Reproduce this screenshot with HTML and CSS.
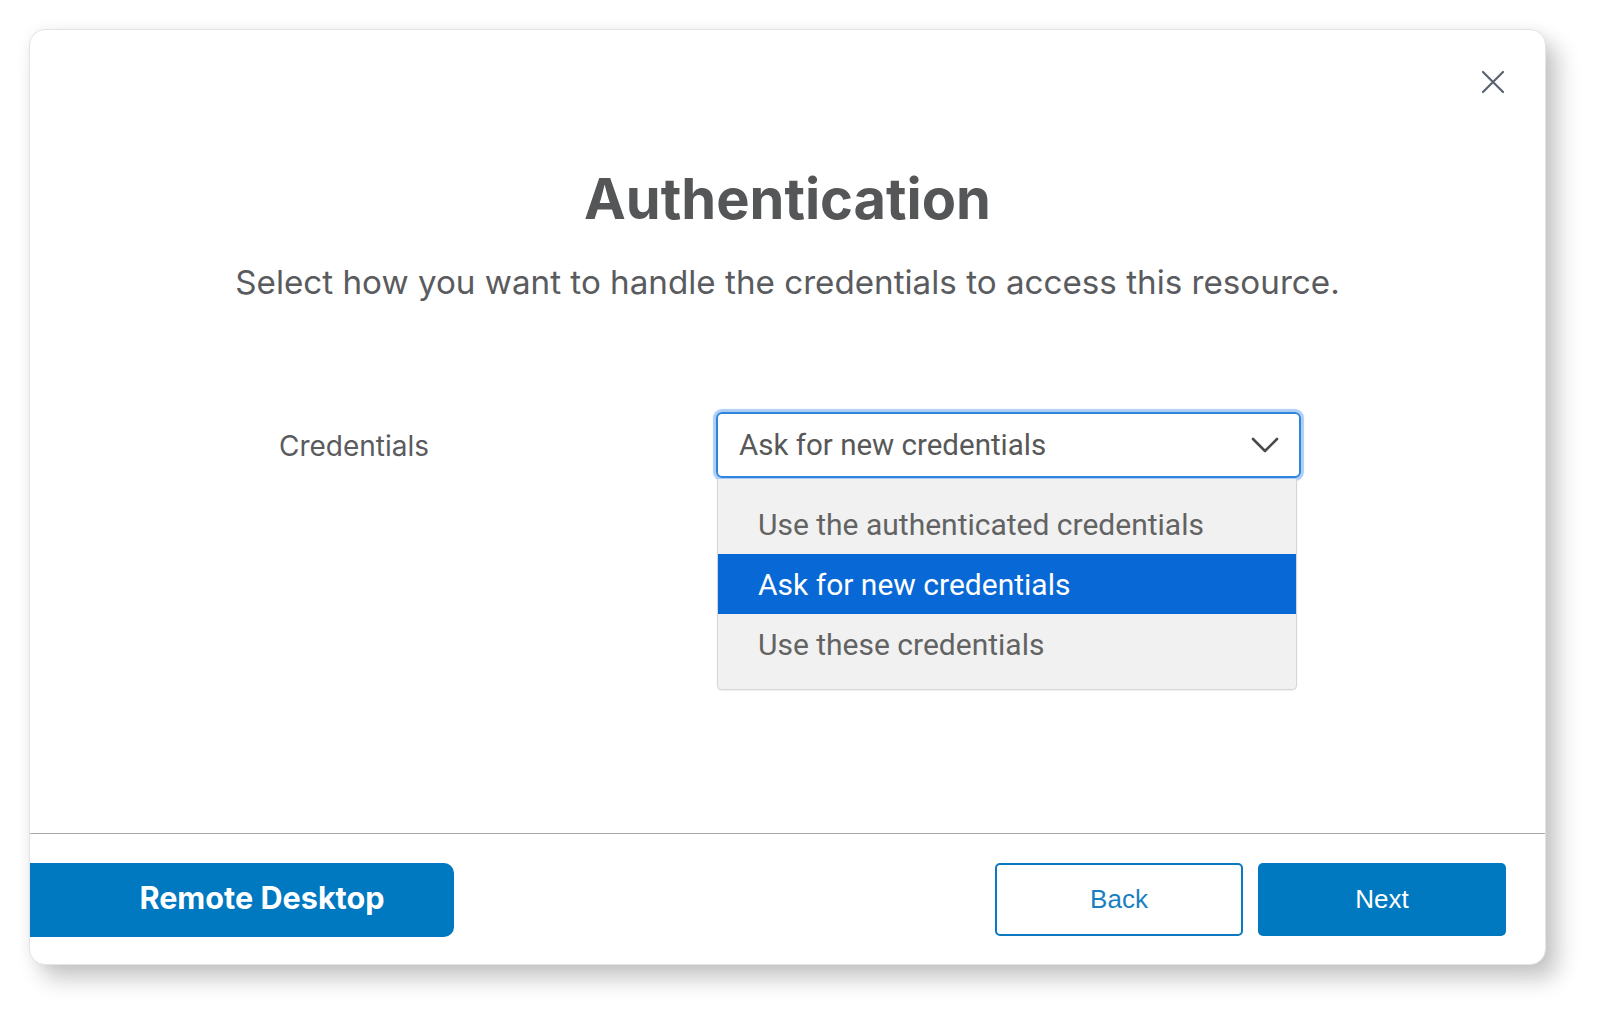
FILE: index.html
```html
<!DOCTYPE html>
<html lang="en">
<head>
  <meta charset="UTF-8" />
  <meta name="viewport" content="width=device-width, initial-scale=1.0"/>
  <title>Authentication</title>
  <link rel="stylesheet" href="styles.css">
</head>
<body>

  <div class="dialog">
    <button class="fechar" aria-label="Close">
      <svg width="24" height="24" viewBox="0 0 24 24">
        <path d="M2 2 L22 22 M22 2 L2 22" stroke="#5a6270" stroke-width="2.2" fill="none" stroke-linecap="round"/>
      </svg>
    </button>

    <main class="conteudo">
      <h1>Authentication</h1>
      <p class="subtitulo">Select how you want to handle the credentials to access this resource.</p>

      <div class="campo">
        <label class="rotulo">Credentials</label>
        <div class="seletor">
          <div class="select-box">
            <span>Ask for new credentials</span>
            <svg width="28" height="16" viewBox="0 0 28 16">
              <path d="M2 2 L14 14 L26 2" stroke="#4a4a4a" stroke-width="2.6" fill="none" stroke-linecap="round" stroke-linejoin="round"/>
            </svg>
          </div>
          <ul class="opcoes">
            <li>Use the authenticated credentials</li>
            <li class="ativo">Ask for new credentials</li>
            <li>Use these credentials</li>
          </ul>
        </div>
      </div>
    </main>

    <footer class="rodape">
      <button class="btn-remote">Remote Desktop</button>
      <div class="acoes">
        <button class="btn-voltar">Back</button>
        <button class="btn-proximo">Next</button>
      </div>
    </footer>
  </div>

</body>
</html>
```

FILE: styles.css
```css
body {
  font-family: 'Inter', 'Noto Sans', sans-serif;
  background-color: #fff;
  color: #58595b;
  margin: 0;
  padding: 29px 0 55px 29px;
}

.dialog {
  position: relative;
  box-sizing: border-box;
  width: 1517px;
  height: 936px;
  background-color: #fff;
  border: 1px solid #e4e4e4;
  border-radius: 16px;
  box-shadow: 12px 14px 22px rgba(0, 0, 0, 0.22), 0 0 14px rgba(0, 0, 0, 0.05);
  display: flex;
  flex-direction: column;
  overflow: hidden;
}

.fechar {
  position: absolute;
  top: 40px;
  right: 40px;
  background: none;
  border: none;
  padding: 0;
  cursor: pointer;
}

.conteudo {
  flex: 1;
  padding-top: 134px;
  text-align: center;
}

h1 {
  margin: 0;
  font-size: 56px;
  line-height: 70px;
  font-weight: 700;
  color: #555658;
}

.subtitulo {
  margin: 28px 0 0;
  font-size: 33.2px;
  line-height: 40px;
  color: #5a5b5e;
}

.campo {
  display: grid;
  grid-template-columns: 437px 585px;
  margin-top: 110px;
  padding-left: 249px;
  text-align: left;
}

.rotulo {
  height: 66px;
  display: flex;
  align-items: center;
  padding-top: 1px;
  font-size: 28px;
  color: #5a5b5e;
}

.select-box {
  box-sizing: border-box;
  height: 66px;
  display: flex;
  align-items: center;
  justify-content: space-between;
  padding: 0 20px 0 21px;
  border: 2px solid #2f84dc;
  border-radius: 6px;
  box-shadow: 0 0 1px 3px rgba(120, 172, 238, 0.6);
  font-family: 'Roboto', sans-serif;
  font-size: 29.5px;
  color: #585858;
}

.opcoes {
  list-style: none;
  margin: 1px 4px 0 1px;
  padding: 15px 0;
  background-color: #f1f1f1;
  border: 1px solid #d6d6d6;
  border-top: none;
  border-radius: 0 0 5px 5px;
  box-shadow: 0 1px 2px rgba(0, 0, 0, 0.08);
}

.opcoes li {
  height: 60px;
  line-height: 61px;
  padding-left: 40px;
  font-family: 'Roboto', sans-serif;
  font-size: 30px;
  color: #636363;
}

.opcoes li.ativo {
  background-color: #0868d6;
  color: #fff;
}

.rodape {
  box-sizing: border-box;
  height: 131px;
  border-top: 1px solid #a9a9a9;
  display: flex;
  justify-content: space-between;
  align-items: flex-start;
  padding: 29px 39px 0 0;
}

button {
  cursor: pointer;
}

.btn-remote {
  width: 424px;
  height: 74px;
  padding: 0 0 6px 40px;
  background-color: #0079c1;
  border: none;
  border-radius: 0 10px 10px 0;
  color: #fff;
  font-family: 'Inter', sans-serif;
  font-size: 30.6px;
  font-weight: 700;
}

.acoes {
  display: flex;
  gap: 15px;
}

.btn-voltar, .btn-proximo {
  width: 248px;
  height: 73px;
  border-radius: 5px;
  font-family: 'Liberation Sans', Arial, sans-serif;
  font-size: 26px;
}

.btn-voltar {
  background-color: #fff;
  border: 2px solid #0a79c1;
  color: #1a7fc1;
}

.btn-proximo {
  background-color: #0079c1;
  border: none;
  color: #fff;
}
```
